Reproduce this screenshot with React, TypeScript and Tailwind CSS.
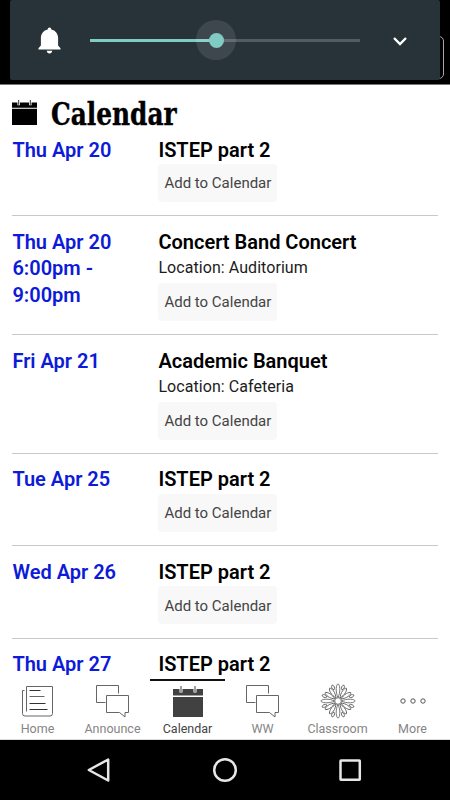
import clsx from "clsx"
import type { ReactNode } from "react"

type CalendarEvent = {
  date: string
  time?: string
  title: string
  location?: string
}

const events: CalendarEvent[] = [
  { date: "Thu Apr 20", title: "ISTEP part 2" },
  { date: "Thu Apr 20", time: "6:00pm - 9:00pm", title: "Concert Band Concert", location: "Auditorium" },
  { date: "Fri Apr 21", title: "Academic Banquet", location: "Cafeteria" },
  { date: "Tue Apr 25", title: "ISTEP part 2" },
  { date: "Wed Apr 26", title: "ISTEP part 2" },
  { date: "Thu Apr 27", title: "ISTEP part 2" },
]

const tabs: { label: string; icon: ReactNode }[] = [
  { label: "Home", icon: <NewsIcon /> },
  { label: "Announce", icon: <ChatIcon /> },
  { label: "Calendar", icon: <CalendarIcon className="h-[31px] w-[30px] text-[#414141]" /> },
  { label: "WW", icon: <ChatIcon /> },
  { label: "Classroom", icon: <FlowerIcon /> },
  { label: "More", icon: <MoreIcon /> },
]

export default function App() {
  return (
    <div className="flex h-[800px] w-[450px] flex-col overflow-hidden bg-white font-['Roboto',sans-serif] text-black">
      <VolumePanel />

      <main className="min-h-0 flex-1 overflow-hidden px-[12.4px]">
        <header className="flex h-[51.500px] items-center pt-1">
          <CalendarIcon className="h-[25px] w-[25px] text-black" />
          <h1 className="mt-1 ml-3.5 origin-left scale-x-[0.89] font-['DejaVu_Serif_Condensed','DejaVu_Serif',serif] text-[31px] leading-none font-bold [-webkit-text-stroke:0.4px_black]">
            Calendar
          </h1>
        </header>
        {events.map((event, i) => (
          <EventRow key={i} event={event} last={i === events.length - 1} />
        ))}
      </main>

      <nav className="grid h-[61px] shrink-0 grid-cols-6 border-b border-[#dcdcdc] bg-white">
        {tabs.map((tab) => (
          <TabItem key={tab.label} label={tab.label} icon={tab.icon} active={tab.label === "Calendar"} />
        ))}
      </nav>

      <SystemBar />
    </div>
  )
}

function VolumePanel() {
  return (
    <div className="relative h-[85px] shrink-0 border-b border-[#777] bg-black px-2.5">
      {/* edge of the button hidden behind the panel */}
      <div className="absolute top-9 right-1.5 h-[43px] w-8 rounded-[5px] border border-[#a8a8a8]" />
      <div className="relative flex h-20 items-center rounded-[2px] bg-[#283339]">
        <svg className="ml-7 h-[27px] w-[23px]" viewBox="0 0 23 27" fill="#fff">
          <path d="M11.5 0.5c1.1 0 1.8.8 1.8 1.9 4.1.9 6.8 4.3 6.8 8.6v7.4l2.4 2.8v1.2H.5v-1.2l2.4-2.8V11c0-4.3 2.7-7.7 6.8-8.6 0-1.1.7-1.9 1.8-1.9zM8.8 23.8h5.4c0 1.6-1.2 2.7-2.7 2.7s-2.7-1.1-2.7-2.7z" />
        </svg>
        <div className="relative ml-[29px] h-[3px] w-[270px] bg-[#535c61]">
          <div className="h-full w-[126px] bg-[#80cbc4]" />
          <div className="absolute top-1/2 left-[126px] flex size-10 -translate-x-1/2 -translate-y-1/2 items-center justify-center rounded-full bg-white/10">
            <div className="size-[15px] rounded-full bg-[#80cbc4]" />
          </div>
        </div>
        <svg className="mt-0.5 ml-[33px] h-2.5 w-3.5" viewBox="0 0 14 10" fill="none" stroke="#fff" strokeWidth="2.4">
          <path d="M1 2l6 6 6-6" />
        </svg>
      </div>
    </div>
  )
}

function EventRow({ event, last }: { event: CalendarEvent; last: boolean }) {
  return (
    <div className={clsx("flex leading-[26.4px]", !last && "mb-[12.6px] border-b border-[#c8c8c8] pb-[13.2px]")}>
      <div className="w-[146px] shrink-0 pr-8 text-[20px] font-semibold text-[#0d1bd9]">
        <div className="whitespace-nowrap">{event.date}</div>
        {event.time && <div>{event.time}</div>}
      </div>
      <div>
        <h2 className="text-[20px] font-semibold">{event.title}</h2>
        {event.location && (
          <p className="text-[16px] tracking-[0.06px] text-[#1c1c1c]">Location: {event.location}</p>
        )}
        {!last && (
          <button className="mt-[1.2px] block h-[38px] w-[119px] rounded-[4px] bg-[#f8f8f8] pt-px text-[15px] whitespace-nowrap text-[#444]">
            Add to Calendar
          </button>
        )}
      </div>
    </div>
  )
}

function TabItem({ label, icon, active }: { label: string; icon: ReactNode; active: boolean }) {
  return (
    <div
      className={clsx(
        "flex flex-col items-center border-t-2",
        active ? "border-[#111] text-[#444]" : "border-transparent text-[#858585]"
      )}
    >
      <div className="flex h-[40px] items-center justify-center">{icon}</div>
      <span className="text-[12.5px] leading-[15px]">{label}</span>
    </div>
  )
}

function SystemBar() {
  return (
    <div className="grid h-[60px] shrink-0 grid-cols-3 items-center bg-black px-9">
      <svg className="size-7 justify-self-center" viewBox="0 0 28 28" fill="none" stroke="#e6e6e6" strokeWidth="2.5">
        <path d="M23.200 3.500v21L3.800 14z" strokeLinejoin="round" />
      </svg>
      <svg className="size-7 justify-self-center" viewBox="0 0 28 28" fill="none" stroke="#e6e6e6" strokeWidth="2.5">
        <circle cx="14" cy="14" r="10.800" />
      </svg>
      <svg className="size-7 justify-self-center" viewBox="0 0 28 28" fill="none" stroke="#e6e6e6" strokeWidth="2.5">
        <rect x="3.500" y="4.500" width="19.300" height="19.300" rx="0.500" />
      </svg>
    </div>
  )
}

function CalendarIcon({ className }: { className: string }) {
  return (
    <svg className={className} viewBox="0 0 30 31" preserveAspectRatio="none">
      <path d="M0 3h30v6.500H0zM0 11h30v20H0z" fill="currentColor" />
      <path d="M8 0v6.500M22 0v6.500" stroke="#fff" strokeWidth="3" />
      <path d="M8 0v6M22 0v6" stroke="currentColor" strokeWidth="1" />
    </svg>
  )
}

function NewsIcon() {
  return (
    <svg className="h-[31px] w-[31px]" viewBox="0 0 31 31" fill="none" stroke="#666" strokeWidth="1">
      <path d="M4.500 25.500V.500h26v27q0 2.500-2.500 2.500H3Q.500 30 .500 27.500V4.500h2" />
      <path d="M7.500 4.500h11M7.500 17.500h16M7.500 23.500h18" stroke="#333" />
      <path d="M7.500 10.500h15" />
    </svg>
  )
}

function ChatIcon() {
  return (
    <svg className="h-[33px] w-[33px]" viewBox="0 0 33 33" fill="none" stroke="#666" strokeWidth="1">
      <path d="M22.500 8.500v-8H.500v17h9" />
      <path d="M10.500 10.500h22v17h-3.500v4.500l-5.500-4.500h-13z" />
    </svg>
  )
}

function FlowerIcon() {
  return (
    <svg className="h-[36px] w-[36px]" viewBox="-18 -18 36 36" fill="none" stroke="#666" strokeWidth="0.9">
      {[0, 90, 180, 270].map((turn) => (
        <g key={turn} transform={`rotate(${turn})`}>
          <path d="M0-3.500C-1.200-6-2-9-1.800-12.500-1.600-15-1-16.800 0-17.200 1-16.800 1.600-15 1.800-12.500 2-9 1.200-6 0-3.500z" />
          {[33, 57].map((angle) => (
            <path
              key={angle}
              d="M0-3.500C-1-6-1.900-8.500-1.700-11-1.500-13.200-.900-14.800 0-15.300.900-14.800 1.500-13.200 1.700-11 1.900-8.500 1-6 0-3.500z"
              transform={`rotate(${angle})`}
            />
          ))}
          {[20, 70].map((angle) => (
            <path
              key={angle}
              d="M0-11.800C-1.900-13.500-1.800-15.700 0-17 1.800-15.700 1.900-13.500 0-11.800z"
              transform={`rotate(${angle})`}
            />
          ))}
        </g>
      ))}
      <circle r="3.300" fill="#fff" />
    </svg>
  )
}

function MoreIcon() {
  return (
    <svg className="h-[6px] w-[26px]" viewBox="0 0 26 6" fill="none" stroke="#555" strokeWidth="1">
      <circle cx="3" cy="3" r="2.200" />
      <circle cx="13" cy="3" r="2.200" />
      <circle cx="23" cy="3" r="2.200" />
    </svg>
  )
}
